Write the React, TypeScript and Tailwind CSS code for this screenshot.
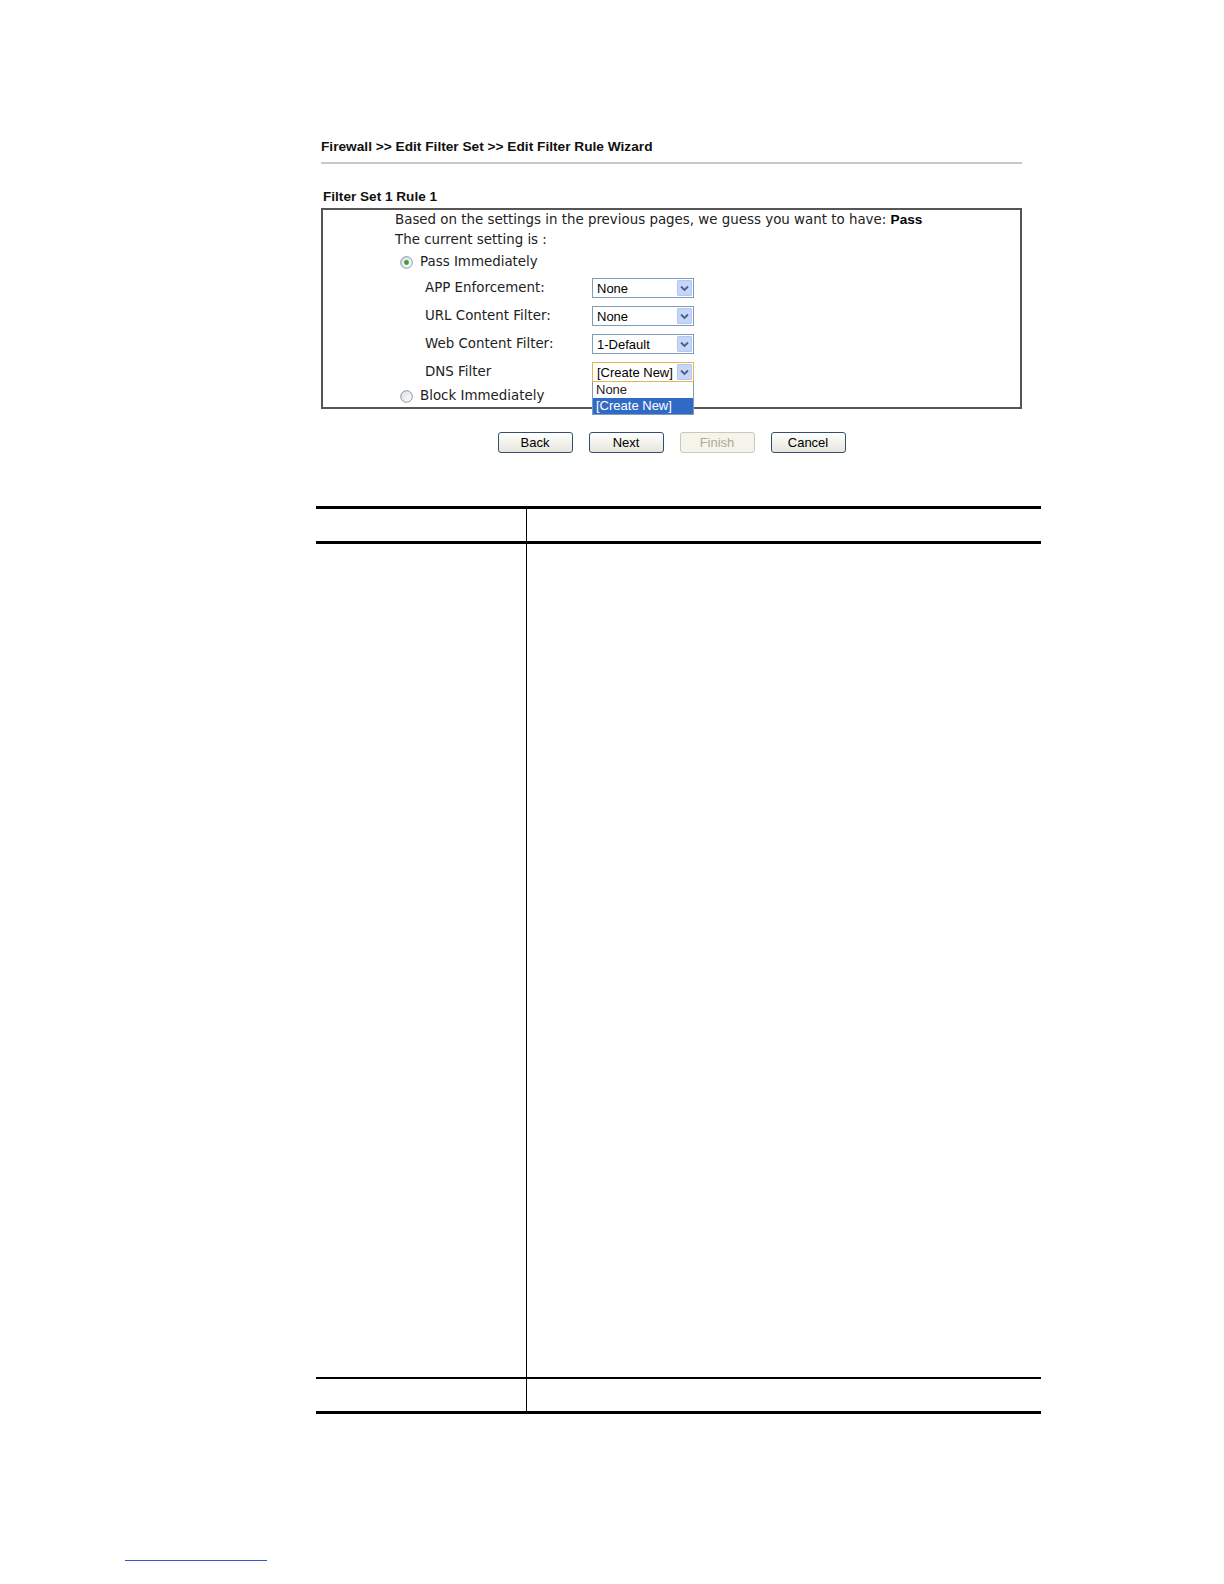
import React from "react";

const verdana = { fontFamily: '"DejaVu Sans", Verdana, sans-serif' };
const arial = { fontFamily: '"Liberation Sans", Arial, sans-serif' };

function Radio({ checked }: { checked?: boolean }) {
  return (
    <svg width="13" height="13" viewBox="0 0 13 13" className="shrink-0">
      <defs>
        <linearGradient id={checked ? "rg1" : "rg2"} x1="0" y1="0" x2="1" y2="1">
          <stop offset="0" stopColor="#dcdcd6" />
          <stop offset="1" stopColor="#ffffff" />
        </linearGradient>
      </defs>
      <circle cx="6.5" cy="6.5" r="5.8" fill={`url(#${checked ? "rg1" : "rg2"})`} stroke="#1c5180" strokeOpacity="0.55" strokeWidth="1" />
      {checked && <circle cx="6.5" cy="6.5" r="2.4" fill="#3aa03a" />}
    </svg>
  );
}

function Arrow() {
  return (
    <span className="flex h-[16px] w-[15px] items-center justify-center rounded-[1px] bg-[#c6d6f8] border border-[#b3c7ef]">
      <svg width="9" height="7" viewBox="0 0 9 7">
        <path d="M1 1.5 L4.5 5 L8 1.5" fill="none" stroke="#4d6185" strokeWidth="1.8" />
      </svg>
    </span>
  );
}

function Select({ value, active }: { value: string; active?: boolean }) {
  return (
    <div
      className={`flex h-[20px] w-[102px] shrink-0 items-center justify-between pl-[4px] pr-[1px] bg-white border ${
        active ? "border-[#e5b358]" : "border-[#7f9db9]"
      }`}
    >
      <span className="text-[13px] text-black leading-none" style={arial}>
        {value}
      </span>
      <Arrow />
    </div>
  );
}

function Btn({ label, disabled }: { label: string; disabled?: boolean }) {
  return (
    <div
      className={`flex h-[21px] w-[75px] items-center justify-center rounded-[3px] border text-[13px] ${
        disabled
          ? "border-[#cac8bb] bg-[#f5f4ea] text-[#aca899]"
          : "border-[#35506f] bg-gradient-to-b from-white to-[#e6e5dc] text-black"
      }`}
      style={arial}
    >
      {label}
    </div>
  );
}

function FieldRow({ label, value, active }: { label: string; value: string; active?: boolean }) {
  return (
    <div className="flex h-[28px] items-center">
      <div className="w-[269px] shrink-0 pl-[102px] whitespace-nowrap">{label}</div>
      <Select value={value} active={active} />
    </div>
  );
}

export default function App() {
  return (
    <div className="relative h-[1584px] w-full overflow-hidden bg-white text-black">
      <div className="ml-[321px] w-[701px] pt-[139px]">
        <div className="text-[13.7px] font-bold leading-[16px] text-[#111]" style={arial}>
          Firewall &gt;&gt; Edit Filter Set &gt;&gt; Edit Filter Rule Wizard
        </div>
        <div className="mt-[7px] h-[2px] bg-[#c8c8c8]" />

        <div className="mt-[25px] pl-[2px] text-[13.6px] font-bold leading-[16px] text-[#111]" style={arial}>
          Filter Set 1 Rule 1
        </div>

        <div className="relative mt-[3px] border-2 border-[#555] text-[13.4px] text-[#222]" style={verdana}>
          <div className="flex h-[20px] items-center pl-[72px] whitespace-nowrap">
            <span>
              Based on the settings in the previous pages, we guess you want to have:{" "}
              <b className="text-black text-[13.6px]" style={arial}>Pass</b>
            </span>
          </div>
          <div className="flex h-[20px] items-center pl-[72px]">The current setting is :</div>
          <div className="flex h-[24px] items-center gap-[7px] pl-[77px]">
            <Radio checked />
            <span>Pass Immediately</span>
          </div>
          <FieldRow label="APP Enforcement:" value="None" />
          <FieldRow label="URL Content Filter:" value="None" />
          <FieldRow label="Web Content Filter:" value="1-Default" />
          <FieldRow label="DNS Filter" value="[Create New]" active />
          <div className="flex h-[21px] items-center gap-[7px] pl-[77px]">
            <Radio />
            <span>Block Immediately</span>
          </div>

          <div
            className="absolute left-[269px] top-[172px] w-[102px] border border-[#7f9db9] border-t-0 bg-white text-[13px] leading-[16px]"
            style={arial}
          >
            <div className="pl-[3px]">None</div>
            <div className="bg-[#316ac5] pl-[3px] text-white">[Create New]</div>
          </div>
        </div>

        <div className="mt-[23px] flex justify-center gap-[16px]">
          <Btn label="Back" />
          <Btn label="Next" />
          <Btn label="Finish" disabled />
          <Btn label="Cancel" />
        </div>
      </div>

      <div className="ml-[316px] mt-[53px] w-[725px]">
        <div className="h-[3px] bg-black" />
        <div className="grid h-[32px] grid-cols-[211px_1fr]">
          <div className="border-r border-black" />
          <div />
        </div>
        <div className="h-[3px] bg-black" />
        <div className="grid h-[833px] grid-cols-[211px_1fr]">
          <div className="border-r border-black" />
          <div />
        </div>
        <div className="h-[2px] bg-black" />
        <div className="grid h-[32px] grid-cols-[211px_1fr]">
          <div className="border-r border-black" />
          <div />
        </div>
        <div className="h-[3px] bg-black" />
      </div>

      <div className="ml-[125px] mt-[146px] h-px w-[142px] bg-[#3a56c9]" />
    </div>
  );
}
